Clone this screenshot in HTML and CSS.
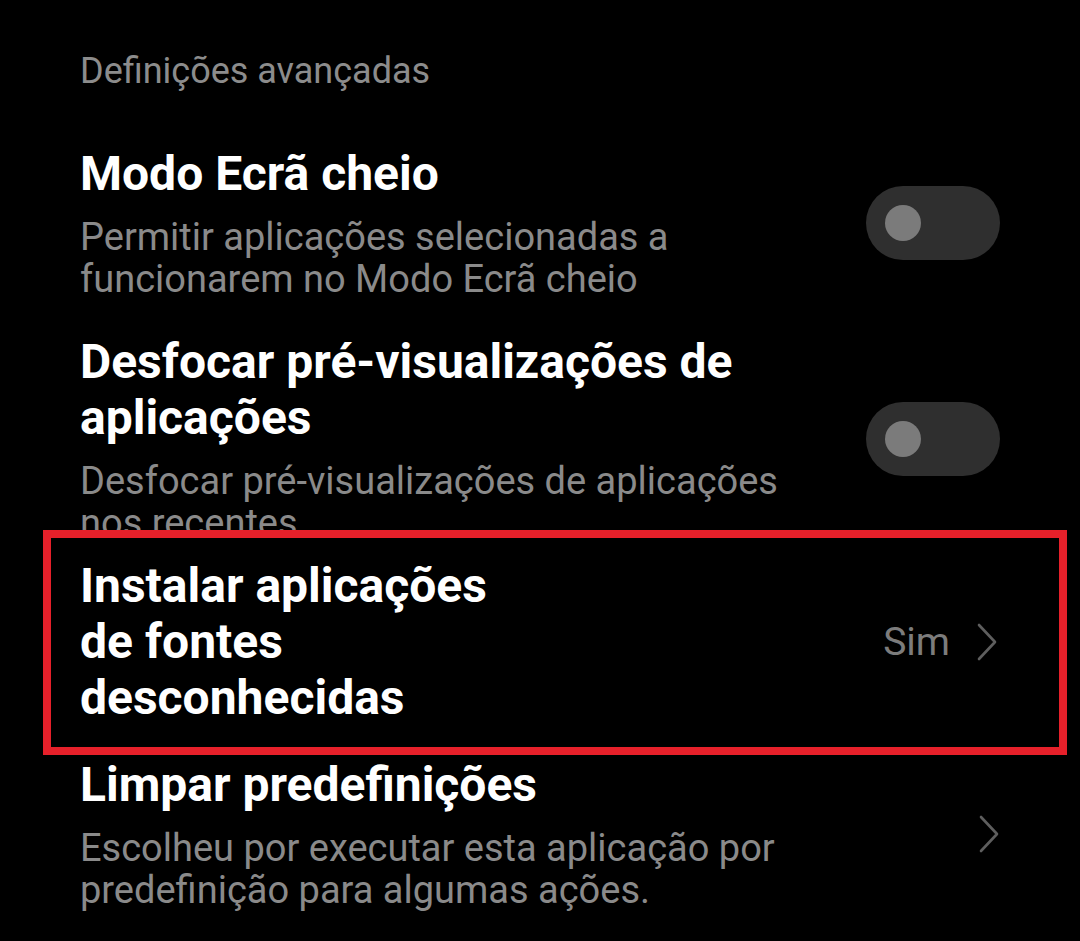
FILE: index.html
```html
<!DOCTYPE html>
<html lang="pt">
<head>
<meta charset="utf-8">
<link rel="stylesheet" href="styles.css">
</head>
<body>
<main class="page">
  <div class="section-header">Definições avançadas</div>

  <div class="row row-first">
    <div class="text">
      <div class="title">Modo Ecrã cheio</div>
      <div class="summary">Permitir aplicações selecionadas a funcionarem no Modo Ecrã cheio</div>
    </div>
    <div class="toggle"><span class="knob"></span></div>
  </div>

  <div class="row">
    <div class="text">
      <div class="title">Desfocar pré-visualizações de aplicações</div>
      <div class="summary">Desfocar pré-visualizações de aplicações nos recentes</div>
    </div>
    <div class="toggle"><span class="knob"></span></div>
  </div>

  <div class="row row-highlight">
    <div class="text text-narrow">
      <div class="title">Instalar aplicações de fontes desconhecidas</div>
    </div>
    <div class="value">Sim</div>
    <svg class="chevron" viewBox="0 0 22 38" width="22" height="38"><path d="M3 2 L19 19 L3 36" fill="none" stroke="currentColor" stroke-width="2.6" stroke-linecap="round" stroke-linejoin="round"/></svg>
  </div>

  <div class="row row-last">
    <div class="text">
      <div class="title">Limpar predefinições</div>
      <div class="summary">Escolheu por executar esta aplicação por predefinição para algumas ações.</div>
    </div>
    <svg class="chevron" viewBox="0 0 22 38" width="22" height="38"><path d="M3 2 L19 19 L3 36" fill="none" stroke="currentColor" stroke-width="2.6" stroke-linecap="round" stroke-linejoin="round"/></svg>
  </div>
</main>
</body>
</html>
```

FILE: styles.css
```css
html, body {
  margin: 0;
  padding: 0;
  background: #000;
}

body {
  font-family: Roboto, "Noto Sans", "Liberation Sans", sans-serif;
  color: #fff;
  width: 1080px;
  height: 941px;
  overflow: hidden;
}

.page {
  padding: 51px 80px 0 80px;
}

.section-header {
  font-size: 36px;
  line-height: 40px;
  color: #8c8c8c;
}

.row {
  display: flex;
  align-items: center;
  margin-top: 34px;
}

.row-first {
  margin-top: 55px;
}

.text {
  flex: 1;
  min-width: 0;
  max-width: 730px;
}

.text-narrow {
  max-width: 440px;
}

.title {
  font-size: 48px;
  line-height: 56px;
  font-weight: 700;
  color: #fff;
}

.summary {
  margin-top: 14px;
  font-size: 38px;
  line-height: 42px;
  color: #8a8a8a;
}

.toggle {
  margin-left: auto;
  width: 134px;
  height: 74px;
  border-radius: 37px;
  background: #2f2f2f;
  display: flex;
  align-items: center;
  padding-left: 19px;
  box-sizing: border-box;
  flex-shrink: 0;
}

.knob {
  width: 36px;
  height: 36px;
  border-radius: 50%;
  background: #7b7b7b;
}

.row-highlight {
  position: relative;
  margin: -14px -67px 0 -37px;
  border: 8px solid #e6202a;
  background: #000;
  padding: 20px 61px 21px 29px;
}

.value {
  margin-left: auto;
  font-size: 39px;
  line-height: 44px;
  color: #7c7c7c;
  margin-right: 26px;
}

.chevron {
  flex-shrink: 0;
  color: #5e5e5e;
  display: block;
}

.row-last {
  margin-top: 2px;
}

.row-last .chevron {
  margin-left: auto;
}
```
